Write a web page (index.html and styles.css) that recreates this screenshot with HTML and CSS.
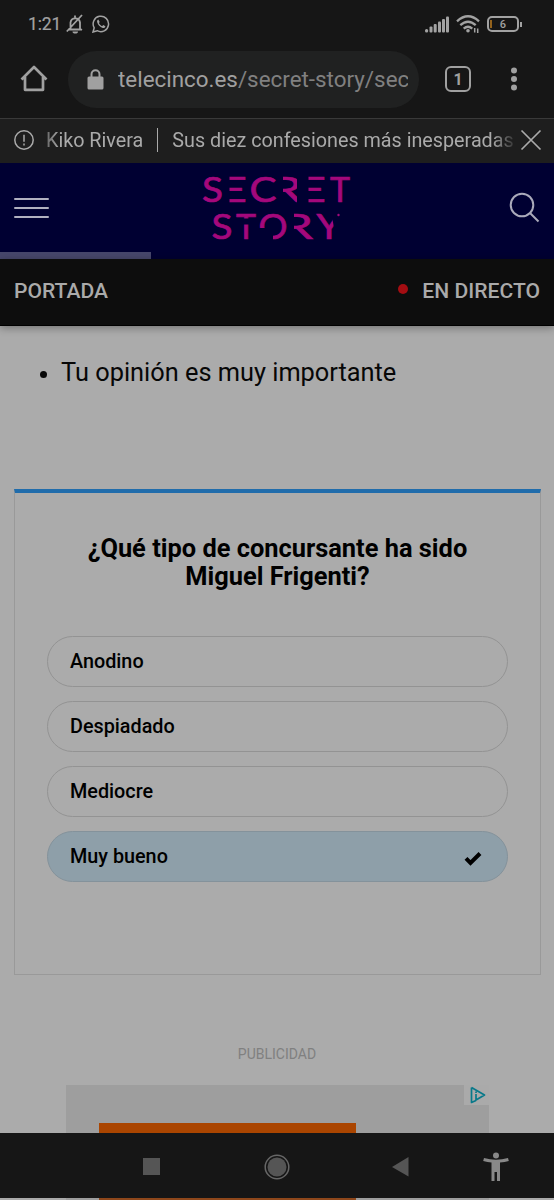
FILE: index.html
```
<!DOCTYPE html>
<html lang="es">
<head>
<meta charset="utf-8">
<meta name="viewport" content="width=device-width">
<title>Secret Story</title>
<link rel="stylesheet" href="styles.css">
</head>
<body>
<div class="screen">
  <div class="status">
    <span class="clock">1:21</span>
    <svg class="bell" width="18" height="20" viewBox="0 0 18 20" fill="none" stroke="currentColor" stroke-width="1.800"><path d="M3 15.500h12.500M4.500 15V8.500a4.800 4.800 0 0 1 9.500 0V15l2 1M9 3.500V1.500M.8 17.500 16 1"/><path d="M6.500 17.500h5.500a2.700 2 0 0 1-5.500 0z" fill="currentColor" stroke="none"/></svg>
    <svg class="chat" width="18" height="18" viewBox="0 0 18 18"><path d="M1 17l1.200-4.200a7.700 7.700 0 1 1 3 2.900z" fill="none" stroke="currentColor" stroke-width="1.500"/><path d="M6.300 4.500c-1 .5-1.500 1.500-1.100 2.800.8 2.800 2.700 4.900 5.500 5.700 1.500.4 2.500-.3 2.700-1.700l-2.100-1.200-1.300 1.100c-1.500-.7-2.500-1.700-3.100-3.100l.8-1z" fill="currentColor"/></svg>
    <span class="spacer"></span>
    <svg width="26" height="17" viewBox="0 0 26 17" fill="currentColor"><rect x="1" y="13" width="3.200" height="3.500" rx="1.500"/><rect x="5.500" y="10.500" width="3" height="6" rx="1"/><rect x="9.700" y="8" width="3" height="8.500" rx="1"/><rect x="14" y="5.500" width="3" height="11" rx="1"/><rect x="18" y="3" width="3" height="13.500" rx="1"/><rect x="22" y=".5" width="3" height="16" rx="1"/></svg>
    <svg class="wifi" width="24" height="19" viewBox="0 0 24 19" fill="none" stroke="currentColor" stroke-width="2.300"><path d="M1 6.300Q12-3.700 23 6.300M4.300 10.200Q12 3.300 19.700 10.200M7.700 13.600Q12 9.800 16.300 13.600"/><circle cx="12" cy="15.800" r="1.800" fill="currentColor" stroke="none"/><path d="M18.700 13v4.500M21.700 13.500v4.500" stroke-width="1.500"/></svg>
    <span class="battery"><i></i><b>6</b></span>
  </div>
  <div class="toolbar">
    <svg class="home" width="28" height="28" viewBox="0 0 28 28" fill="none" stroke="currentColor" stroke-width="2.700" stroke-linejoin="round"><path d="M1.500 14.500 14 2l12.500 12.500M5 12v12.800h18V12"/></svg>
    <div class="address">
      <svg width="17" height="21" viewBox="0 0 17 21"><rect x=".5" y="7.500" width="16" height="13" rx="1.500" fill="currentColor"/><path d="M4.500 8V5.200a4 4 0 0 1 8 0V8" fill="none" stroke="currentColor" stroke-width="2"/></svg>
      <div class="url">telecinco.es<span>/secret-story/sec</span></div>
    </div>
    <div class="tabs">1</div>
    <svg class="more" width="8" height="24" viewBox="0 0 8 24" fill="currentColor"><circle cx="4" cy="3.500" r="3"/><circle cx="4" cy="12" r="3"/><circle cx="4" cy="20.500" r="3"/></svg>
  </div>
  <div class="ticker">
    <svg width="20" height="20" viewBox="0 0 20 20" fill="none" stroke="currentColor" stroke-width="1.500"><circle cx="10" cy="10" r="9.200"/><path d="M10 4.800v7M10 13.500v2"/></svg>
    <div class="news"><span>Kiko Rivera</span><i></i><span class="headline">Sus diez confesiones más inesperadas</span></div>
    <svg width="22" height="22" viewBox="0 0 22 22" fill="none" stroke="currentColor" stroke-width="1.700"><path d="M1.500 1.500 20.500 20.500M20.500 1.500 1.500 20.500"/></svg>
  </div>
  <header class="brand">
    <div class="brand-row">
      <div class="burger"><i></i><i></i><i></i></div>
      <svg class="logo" width="150" height="68" viewBox="202 174 150 68">
        <g class="letters">
          <text x="218" y="201.500" textLength="29" lengthAdjust="spacingAndGlyphs">E</text>
          <text x="271" y="201.500" textLength="31" lengthAdjust="spacingAndGlyphs">R</text>
          <text x="297" y="201.500" textLength="29" lengthAdjust="spacingAndGlyphs">E</text>
          <text x="282" y="239.300" textLength="31" lengthAdjust="spacingAndGlyphs">R</text>
          <text x="236" y="239.300" textLength="20" lengthAdjust="spacingAndGlyphs">T</text>
          <text x="316.500" y="239.300" textLength="25" lengthAdjust="spacingAndGlyphs">Y</text>
        </g>
        <g class="cuts">
          <rect x="218" y="174" width="11.500" height="30"/><rect x="271" y="174" width="12" height="30"/><rect x="297" y="174" width="11.500" height="30"/>
          <rect x="240" y="218.500" width="13" height="6"/><rect x="283" y="211" width="11" height="30"/>
          <path d="M331 211h12v15l-9 2z"/>
        </g>
        <g class="letters">
          <text x="202" y="201.500" textLength="21" lengthAdjust="spacingAndGlyphs">S</text>
          <text x="249.500" y="201.500" textLength="27" lengthAdjust="spacingAndGlyphs">C</text>
          <text x="330" y="201.500" textLength="20" lengthAdjust="spacingAndGlyphs">T</text>
          <text x="211.500" y="239.300" textLength="21" lengthAdjust="spacingAndGlyphs">S</text>
          <text x="258.500" y="239.300" textLength="29" lengthAdjust="spacingAndGlyphs">O</text>
        </g>
        <path class="cuts" d="M257 228h10l6 6v8h-16z"/>
        <circle class="dot" cx="338.500" cy="215" r="1.200"/>
      </svg>
      <svg class="search" width="31" height="31" viewBox="0 0 31 31" fill="none" stroke="currentColor" stroke-width="2"><circle cx="13" cy="13" r="11.300"/><path d="M21 21l8.500 8.500"/></svg>
    </div>
    <div class="progress"></div>
  </header>
  <nav class="menu"><span>PORTADA</span><span class="live"><i></i>EN DIRECTO</span></nav>
  <main class="content">
    <ul class="notes"><li>Tu opinión es muy importante</li></ul>
    <section class="poll">
      <h2>¿Qué tipo de concursante ha sido Miguel Frigenti?</h2>
      <div class="option">Anodino</div>
      <div class="option">Despiadado</div>
      <div class="option">Mediocre</div>
      <div class="option chosen">Muy bueno<svg width="18" height="15" viewBox="0 0 18 15"><path d="M2 7.300 6.500 12 16 2.500" fill="none" stroke="#000" stroke-width="4"/></svg></div>
    </section>
    <p class="ad-label">PUBLICIDAD</p>
    <div class="ad">
      <div class="ad-picture"></div>
      <div class="adchoice"><svg width="16" height="18" viewBox="0 0 16 18" fill="none" stroke="#08798a" stroke-width="1.700" stroke-linejoin="round"><path d="M1.500 1.500v15L6 14.500M1.500 1.500 14.500 9 6 14V8M6 5.500v1.500"/></svg></div>
    </div>
  </main>
  <div class="system">
    <svg width="554" height="65" viewBox="0 1133 554 65"><path d="M143 1158h17v17h-17z" fill="#555"/><circle cx="277" cy="1167" r="11.800" fill="none" stroke="#666" stroke-width="1.500"/><circle cx="277" cy="1167" r="9.500" fill="#555"/><path d="M392 1167l16.500-10v19.500z" fill="#555"/><g fill="#888"><circle cx="496" cy="1155.500" r="3"/><path d="M484 1158q12 3.500 24 0l.8 3q-4 1-8.800 1.500V1181h-3v-9h-2.500v9h-3v-18.500q-4-.5-8.300-1.500z"/></g></svg>
  </div>
  <div class="edge"></div>
</div>
</body>
</html>
```
FILE: styles.css
```
* { box-sizing: border-box; }
body { margin: 0; font-family: Roboto, "Liberation Sans", sans-serif; background: #ababab; }
svg { display: block; flex: none; }
.screen { width: 554px; height: 1200px; overflow: hidden; display: flex; flex-direction: column; }
.screen > * { flex: none; }

.status { height: 48px; background: #161616; color: #a2a2a2; display: flex; align-items: center; padding: 0 35px 0 28px; }
.clock { font-size: 17.500px; width: 38px; letter-spacing: -.1px; -webkit-text-stroke: .2px currentColor; }
.chat { margin-left: 8px; }
.spacer { flex: 1; }
.wifi { margin: 0 7px 0 6px; }
.battery { width: 32px; height: 16px; border: 2px solid #a2a2a2; border-radius: 5px; position: relative; display: flex; align-items: center; justify-content: center; font-size: 11px; }
.battery b { font-weight: 500; }
.battery i { position: absolute; left: 1px; top: 2px; width: 2px; height: 8px; background: #93621c; }
.battery::after { content: ""; position: absolute; right: -5px; top: 4px; width: 2px; height: 5px; background: #a2a2a2; }

.toolbar { height: 70px; background: #161616; color: #a0a0a0; display: flex; align-items: center; padding: 0 35px 8px 20px; }
.address { width: 351px; height: 57px; margin-left: 20px; border-radius: 29px; background: #202121; display: flex; align-items: center; padding: 0 11px 0 19px; }
.url { flex: 1; min-width: 0; margin-left: 14px; font-size: 22.400px; line-height: 30px; white-space: nowrap; overflow: hidden; }
.url span { color: #808080; }
.tabs { width: 26px; height: 26px; margin-left: 26px; border: 2.500px solid #a0a0a0; border-radius: 6px; display: grid; place-items: center; font-size: 16px; font-weight: 700; }
.more { margin-left: 39px; }

.ticker { height: 45px; background: #1e1e1e; border-top: 1px solid #393939; color: #aaa; display: flex; align-items: center; padding: 0 12px 2px 14px; }
.news { display: flex; align-items: center; width: 468px; margin: 0 7px 0 12px; overflow: hidden; white-space: nowrap; font-size: 19.750px; -webkit-mask-image: linear-gradient(90deg, #0008, #000 14px, #000 446px, #0003); mask-image: linear-gradient(90deg, #0008, #000 14px, #000 446px, #0003); }
.news i { flex: none; width: 1px; height: 24px; background: #aaa; margin: 0 14px; }

.brand { height: 96px; background: #000032; color: #aaaabb; display: flex; flex-direction: column; }
.brand-row { height: 89px; display: flex; align-items: center; padding: 0 14px; }
.burger { width: 35px; display: grid; gap: 7px; }
.burger i { height: 2px; background: #b0b0c0; border-radius: 1px; }
.logo { margin-left: 153px; overflow: visible; }
.letters { font-family: Lato, sans-serif; font-size: 34.500px; fill: #a4087c; stroke: #a4087c; stroke-width: .7; }
.cuts { fill: #000032; }
.dot { fill: #a4087c; }
.search { margin-left: auto; }
.progress { width: 151px; height: 7px; background: #47476b; }

.menu { height: 67px; background: #0d0d0d; border-bottom: 1px solid #000; color: #aaa; display: flex; justify-content: space-between; align-items: center; padding: 0 14px 3px; font-size: 21.100px; font-weight: 500; box-shadow: 0 2px 8px #0005; position: relative; }
.live { display: flex; align-items: center; }
.live i { width: 10px; height: 10px; border-radius: 50%; background: #a40d12; margin: 0 14px 3px 0; }

.content { height: 807px; overflow: hidden; background: #ababab; color: #000; }
.notes { margin: 30px 0 0; padding-left: 61px; font-size: 25.350px; line-height: 32px; color: #070707; }
.notes li::marker { font-size: 24px; }
.poll { margin: 101px 13px 0 14px; height: 486px; border: 1px solid #999; border-top: 4px solid #206cab; padding: 41px 32px 0; }
.poll h2 { margin: 0 0 46px; font-size: 25.400px; line-height: 28px; font-weight: 700; text-align: center; padding: 0 30px; }
.option { height: 51px; margin-bottom: 14px; border: 1px solid #939393; border-radius: 26px; padding: 0 25px 0 22px; display: flex; align-items: center; justify-content: space-between; font-size: 19.800px; font-weight: 500; }
.chosen { background: #8e9fa9; border-color: #84929b; }
.chosen svg { margin-top: 4px; }
.ad-label { margin: 70px 0 0; text-align: center; font-size: 14px; line-height: 18px; color: #808080; }
.ad { position: relative; width: 423px; height: 120px; margin: 22px 0 0 66px; padding: 38px 0 0 33px; background: #9e9e9e; }
.ad-picture { width: 257px; height: 90px; background: #aa4500; }
.adchoice { position: absolute; right: 0; top: 0; width: 25px; height: 20px; padding: 1px 0 0 6px; background: #aaa; }
.system { height: 65px; background: #161616; }
.edge { height: 2px; background: linear-gradient(90deg, #ababab 66px, #9e9e9e 66px, #9e9e9e 99px, #8e471b 99px, #8e471b 356px, #9e9e9e 356px, #9e9e9e 489px, #ababab 489px); }
```
